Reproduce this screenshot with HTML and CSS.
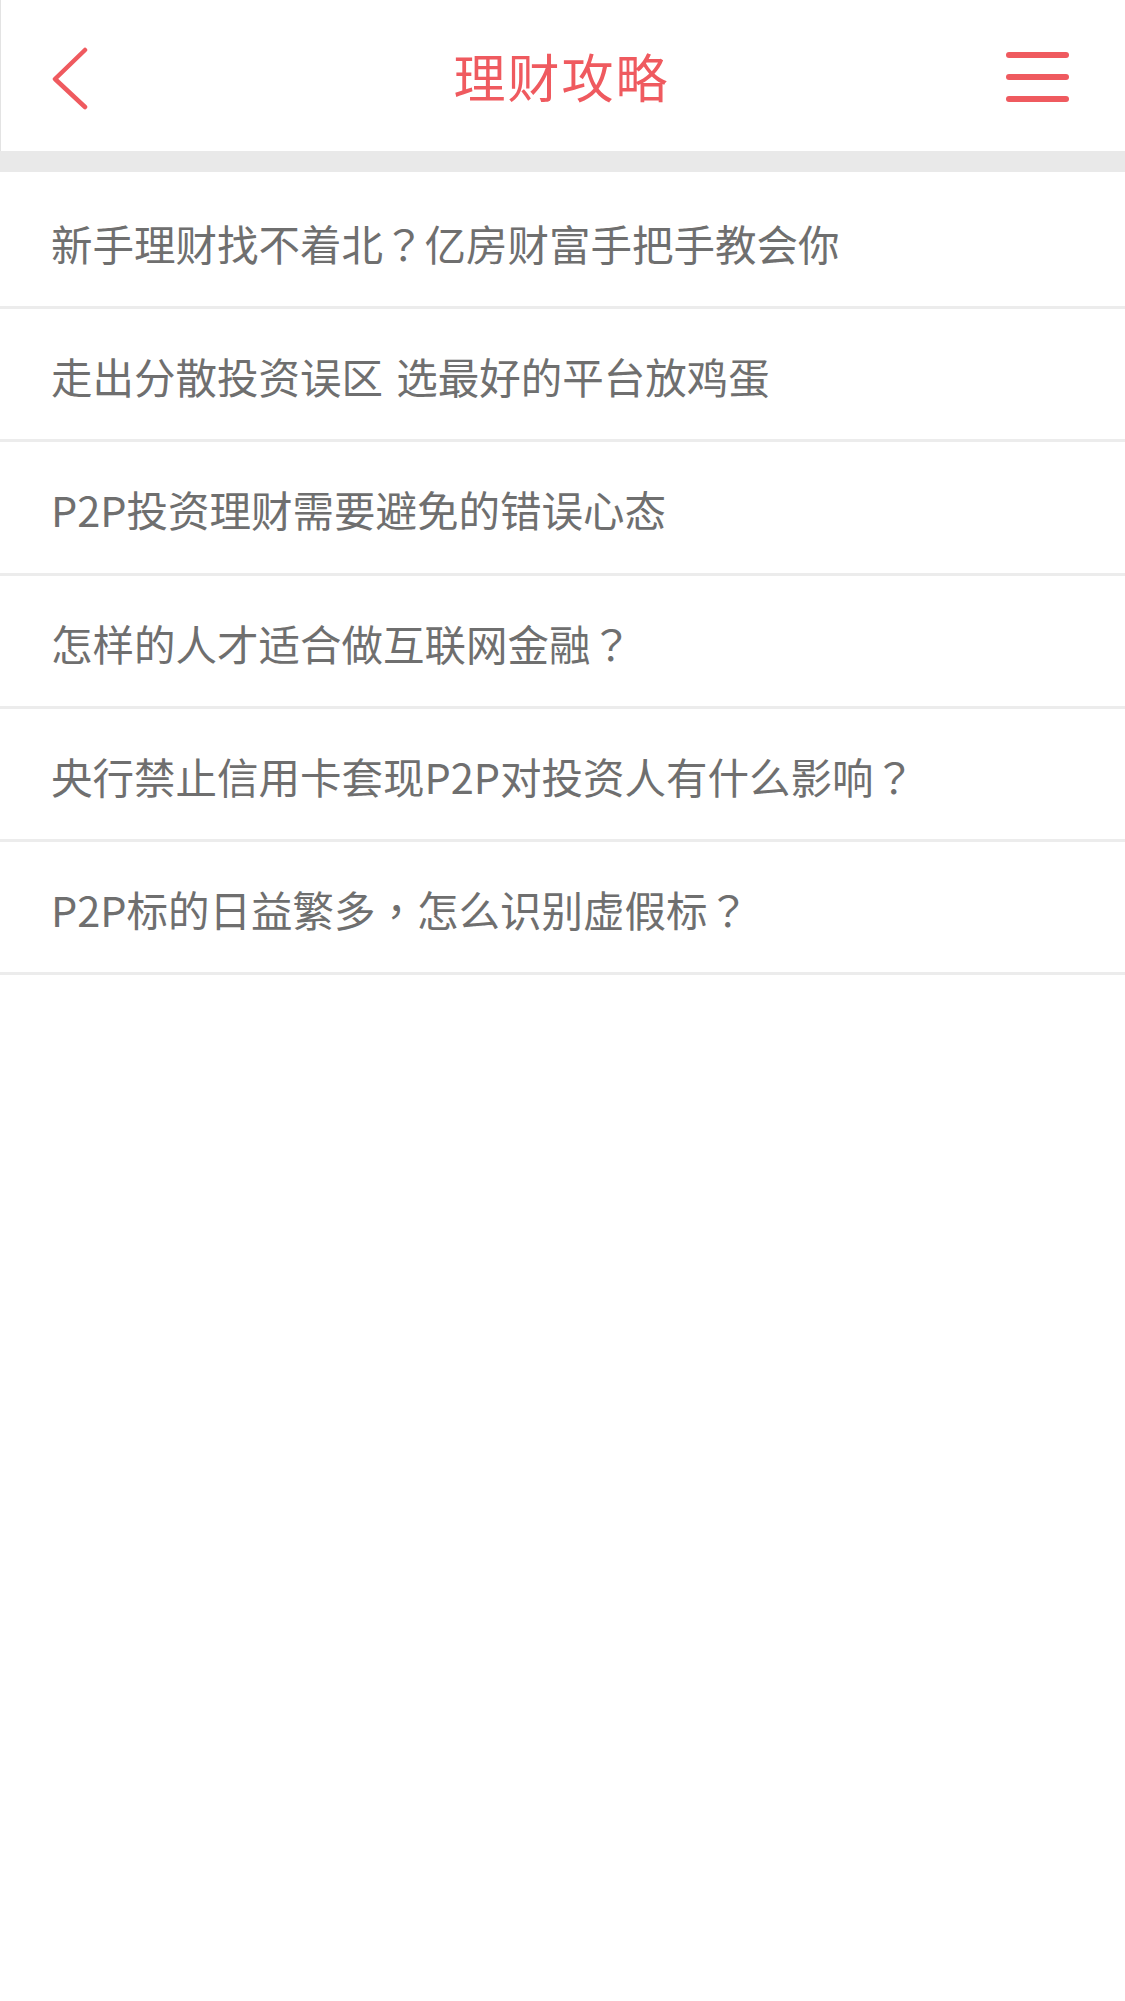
FILE: index.html
```html
<!DOCTYPE html>
<html lang="zh-CN">
<head>
<meta charset="utf-8">
<title>理财攻略</title>
<link rel="stylesheet" href="styles.css">
</head>
<body>
<div class="page">
  <header class="topbar">
    <a class="back" href="#" aria-label="返回">
      <svg width="40" height="70" viewBox="0 0 40 70"><polyline points="33,9 3,38 33,66" fill="none" stroke="#ef5a5f" stroke-width="4.5" stroke-linecap="round" stroke-linejoin="round"/></svg>
    </a>
    <h1 class="title">理财攻略</h1>
    <a class="menu" href="#" aria-label="菜单">
      <span class="bar"></span><span class="bar"></span><span class="bar"></span>
    </a>
  </header>
  <div class="band"></div>
  <ul class="list">
    <li class="item">新手理财找不着北<span class="punct">？</span>亿房财富手把手教会你</li>
    <li class="item">走出分散投资误区 选最好的平台放鸡蛋</li>
    <li class="item">P2P投资理财需要避免的错误心态</li>
    <li class="item">怎样的人才适合做互联网金融<span class="punct">？</span></li>
    <li class="item">央行禁止信用卡套现P2P对投资人有什么影响<span class="punct">？</span></li>
    <li class="item">P2P标的日益繁多<span class="punct">，</span>怎么识别虚假标<span class="punct">？</span></li>
  </ul>
</div>
</body>
</html>
```
FILE: styles.css
```css
html, body {
  margin: 0;
  padding: 0;
  background: #ffffff;
}
body {
  font-family: "Noto Sans CJK SC", "Noto Sans", sans-serif;
}
.page {
  width: 1125px;
  min-height: 2001px;
  background: #fff;
}
.topbar {
  height: 151px;
  box-sizing: border-box;
  border-left: 1px solid #e3e3e3;
  display: grid;
  grid-template-columns: 1fr auto 1fr;
  align-items: center;
  padding: 0 56px 0 51px;
}
.back {
  display: flex;
  width: 40px;
  height: 70px;
  margin-top: 1px;
  justify-self: start;
}
.title {
  margin: 0;
  font-size: 52px;
  font-weight: 400;
  letter-spacing: 2px;
  color: #ef5a5f;
  line-height: 1;
  padding-left: 2px;
}
.menu {
  display: flex;
  flex-direction: column;
  gap: 16px;
  width: 63px;
  margin-top: 2px;
  justify-self: end;
}
.bar {
  display: block;
  height: 6px;
  border-radius: 3px;
  background: #ef5a5f;
}
.band {
  height: 21px;
  background: #e9e9e9;
}
.list {
  list-style: none;
  margin: 0;
  padding: 4px 0 0;
}
.item {
  height: 133.2px;
  box-sizing: border-box;
  border-bottom: 3px solid #ececec;
  display: flex;
  align-items: center;
  padding: 4px 0 0 51px;
  font-size: 41.5px;
  color: #6f6f6f;
  word-spacing: 4px;
  white-space: pre;
}
.punct {
  font-family: "Noto Sans CJK TC", "Noto Sans CJK SC", sans-serif;
}
```
